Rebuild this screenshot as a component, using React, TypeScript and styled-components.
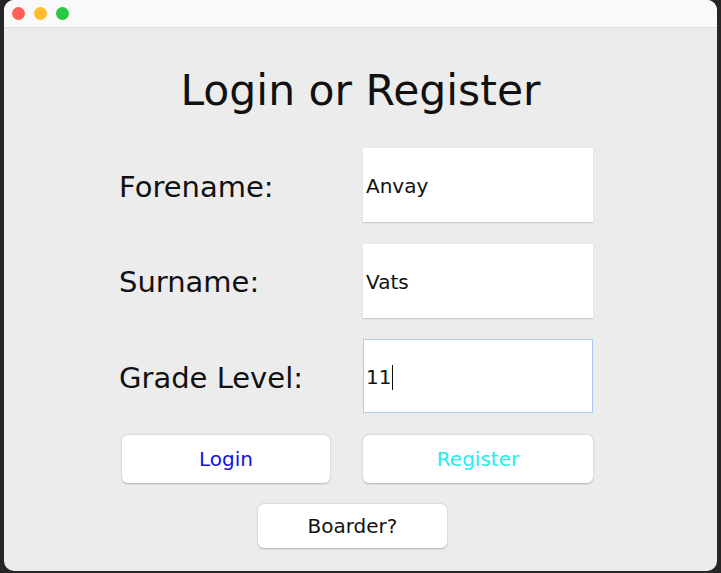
import styled, {createGlobalStyle} from 'styled-components';

const GlobalStyle = createGlobalStyle`
    html, body {
        margin: 0;
        padding: 0;
        background: #262626;
    }
    body {
        font-family: "DejaVu Sans", "Noto Sans", sans-serif;
    }
`

const Screen = styled.div`
    width: 721px;
    height: 573px;
    padding: 0 4px 2px 4px;
    box-sizing: border-box;
`;

const Window = styled.div`
    height: 571px;
    border-radius: 10px;
    overflow: hidden;
    display: flex;
    flex-direction: column;
    background: #ececec;
`;

const TitleBar = styled.div`
    height: 27px;
    flex-shrink: 0;
    display: flex;
    align-items: center;
    gap: 9px;
    padding-left: 8px;
    background: #f9f9f9;
    border-bottom: 1px solid #dcdcdc;
`;

const Light = styled.span<{ $color: string }>`
    width: 13px;
    height: 13px;
    border-radius: 50%;
    background: ${p => p.$color};
`;

const Content = styled.div`
    flex: 1;
    display: flex;
    flex-direction: column;
`;

const Title = styled.h1`
    margin: 34px 0 0 0;
    height: 56px;
    display: flex;
    align-items: center;
    justify-content: center;
    font-size: 42.5px;
    font-weight: 400;
    color: #111;
`;

const Form = styled.div`
    margin: 30px 0 0 115px;
    display: grid;
    grid-template-columns: 244px 230px;
    row-gap: 21.5px;
`;

const Label = styled.div`
    height: 74px;
    box-sizing: border-box;
    padding-top: 3px;
    display: flex;
    align-items: center;
    font-size: 29px;
    color: #111;
`;

const Field = styled.div<{ $focused?: boolean }>`
    height: 74px;
    box-sizing: border-box;
    background: #fff;
    display: flex;
    align-items: center;
    padding: 2px 0 0 2px;
    font-size: 20px;
    color: #111;
    border: 1px solid ${p => p.$focused ? '#a9c9ee' : 'transparent'};
    box-shadow: ${p => p.$focused ? 'none' : '0 1px 1px rgba(0, 0, 0, 0.14)'};
`;

const Caret = styled.span`
    display: inline-block;
    width: 1px;
    height: 25px;
    margin-left: 1px;
    background: #111;
`;

const Button = styled.button<{ $color: string; $width: number; $height: number; $offset?: number }>`
    justify-self: start;
    margin-left: ${p => p.$offset ?? 0}px;
    width: ${p => p.$width}px;
    height: ${p => p.$height}px;
    border: none;
    border-radius: 6px;
    background: #fff;
    box-shadow: 0 0.5px 2px rgba(0, 0, 0, 0.25);
    font-family: "DejaVu Sans", "Noto Sans", sans-serif;
    font-size: 20px;
    color: ${p => p.$color};
    padding: 0;
`;

export default function App() {
    return (
        <Screen>
            <GlobalStyle/>
            <Window>
                <TitleBar>
                    <Light $color="#fe5f57"/>
                    <Light $color="#febc2e"/>
                    <Light $color="#28c840"/>
                </TitleBar>
                <Content>
                    <Title>Login or Register</Title>
                    <Form>
                        <Label>Forename:</Label>
                        <Field>Anvay</Field>
                        <Label>Surname:</Label>
                        <Field>Vats</Field>
                        <Label>Grade Level:</Label>
                        <Field $focused>11<Caret/></Field>
                        <Button $color="#1111dd" $width={208} $height={48} $offset={3}>Login</Button>
                        <Button $color="#22eeee" $width={230} $height={48}>Register</Button>
                        <Button $color="#111" $width={189} $height={44} $offset={139}>Boarder?</Button>
                    </Form>
                </Content>
            </Window>
        </Screen>
    );
}
